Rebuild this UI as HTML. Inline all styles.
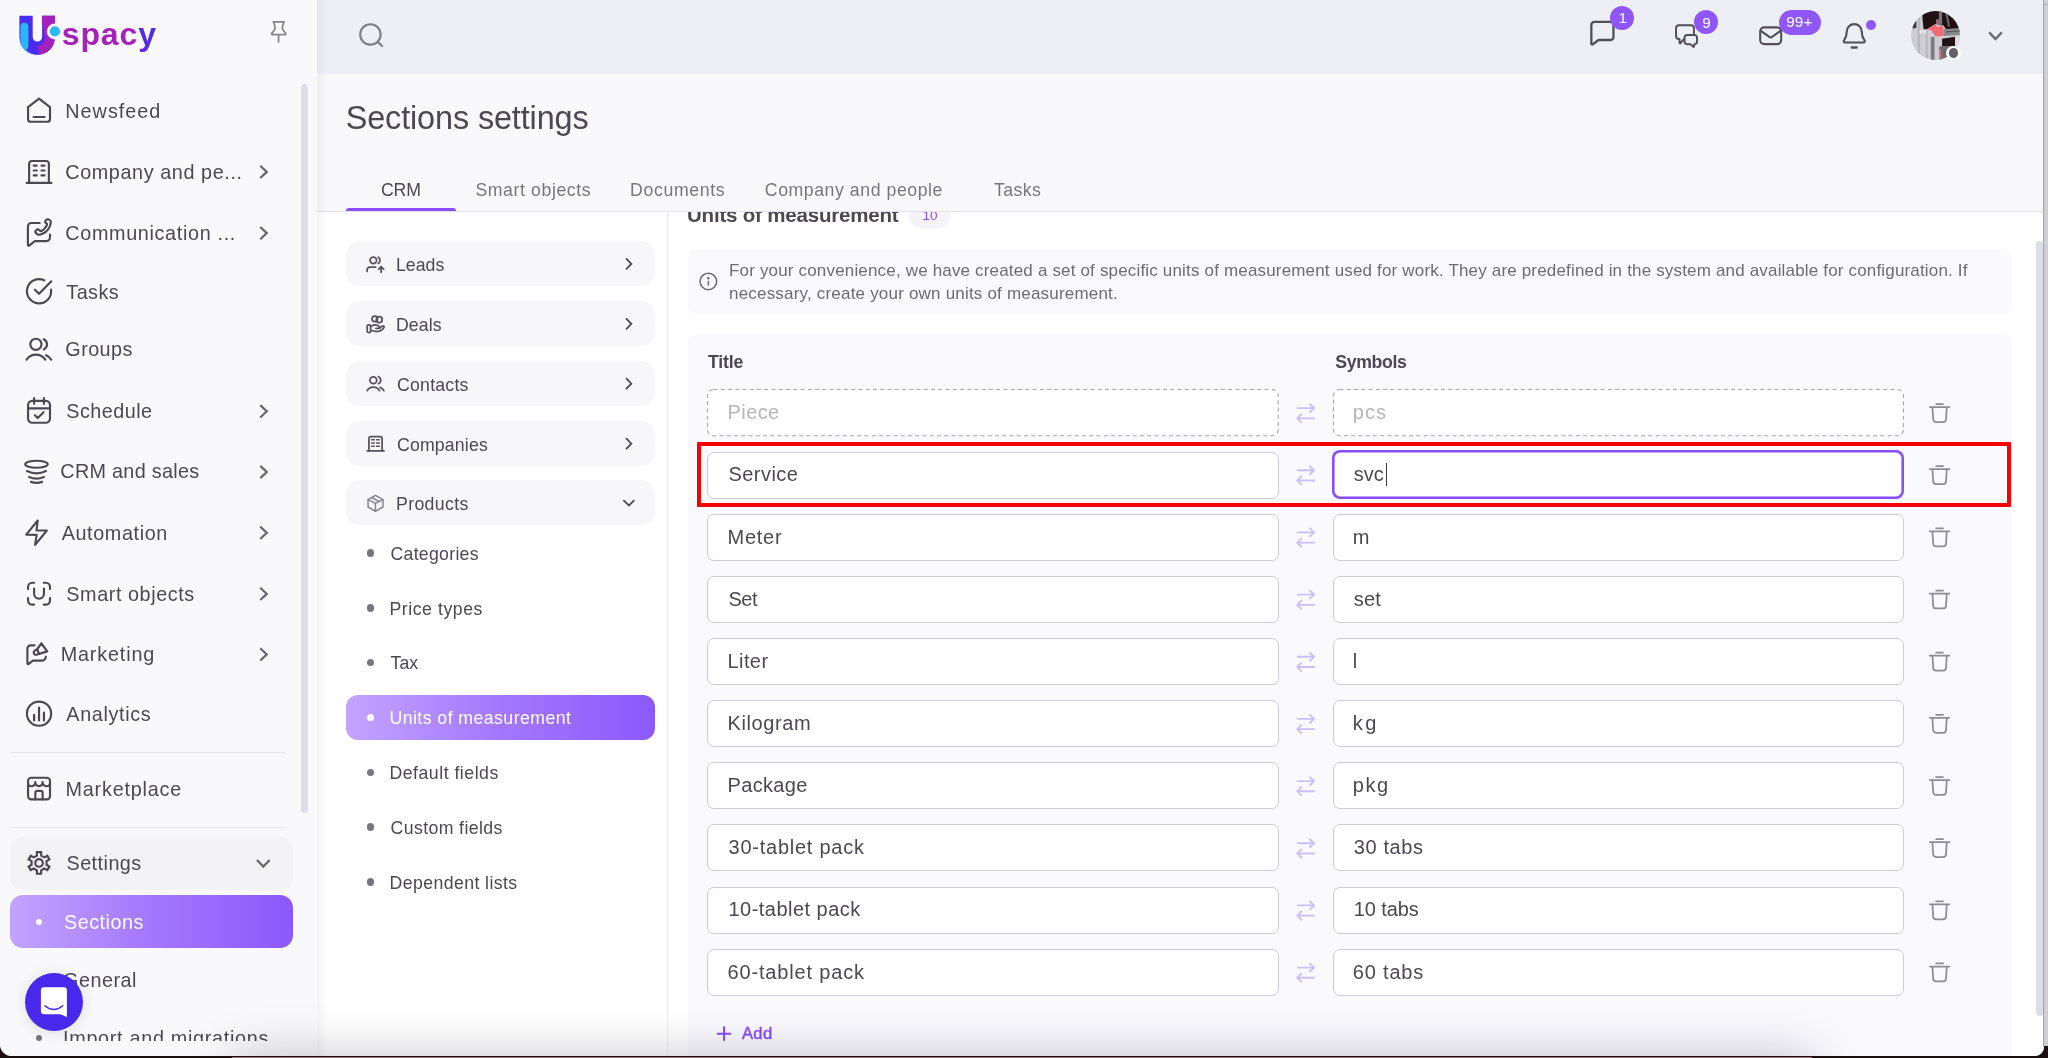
<!DOCTYPE html><html lang="en"><head><meta charset="utf-8"><title>Sections settings</title><style>
*{box-sizing:border-box;margin:0;padding:0}
html,body{width:2048px;height:1058px;overflow:hidden}
body{position:relative;background:#1b0f12;font-family:"Liberation Sans",sans-serif;color:#4b4851}
.abs,.t,.ic,#app *{position:absolute}
.t{white-space:nowrap;display:block}
h1,h2,p{font-weight:400;font-size:inherit}
#app .logo b{position:static;font-weight:inherit;color:#552be2}
#app{position:absolute;will-change:transform;left:0;top:0;width:2044px;height:1055.5px;background:#f9f9fb;border-radius:0 0 9px 12px;overflow:hidden}
#edge{left:2043px;top:0;width:5px;height:1046px;background:#d0d0d4;border-left:1.5px solid #a5a3a9}
#sidebar{left:0;top:0;width:317px;height:1056px;background:#f9f9fb}
#topbar{left:317px;top:0;width:1727px;height:73.5px;background:#eeeff5}
#content{left:317px;top:212px;width:1727px;height:844px;background:#fff}
.sep{height:1.5px;background:#e7e6eb;left:10px;width:275px}
.sbar{background:#dddde6;border-radius:4px}
.navbg{left:10px;width:282.5px;border-radius:13px}
.grad{background:linear-gradient(90deg,#c3a4fe 0%,#a67bfd 45%,#8c58fb 100%)}
.mi{left:346px;width:309px;height:45px;border-radius:14px;background:#f7f7f9}
.dot{width:7.400px;height:7.400px;border-radius:50%;background:#77757d}
.inp{height:47px;border:1.3px solid #cdccd3;border-radius:7px;background:#fff}
.inp.dis{border:1.3px dashed #b9b8bf;background:#fff}
.inp.foc{border:0;box-shadow:inset 0 0 0 2.600px #8a4dfb;border-radius:8px}
.med{-webkit-text-stroke:.45px currentColor}
.badge{background:#8f57fa;border-radius:13px}
</style></head><body>
<div id="app">
<aside id="sidebar">
<svg class="ic" style="left:17px;top:13px" width="46" height="46" viewBox="0 0 46 46">
<defs><clipPath id="uc"><path d="M2.400 2.800 H15.700 V23.900 a4.700 4.700 0 0 0 9.400 0 V2.800 H38 V24.100 a17.800 17.800 0 0 1 -35.600 0 Z"/></clipPath></defs>
<g clip-path="url(#uc)"><rect x="0" y="0" width="46" height="46" fill="#4a2cea"/>
<path d="M23 0 H40 V30 c0 8 -6 12 -17 12 l-3-9 c4 0 8-3 8-9 Z" fill="#a421bd"/>
<rect x="3.400" y="9.800" width="8" height="27" rx="4" fill="#2bb7f4"/>
<path d="M3.400 30 l10 10 l-6 2 l-6-10 Z" fill="#2bb7f4" opacity=".5"/></g>
<circle cx="37.900" cy="18.400" r="8" fill="#f9f9fb"/><circle cx="37.900" cy="18.400" r="5.100" fill="#2bb9f4"/></svg>
<span class="t logo" style="left:61.70px;top:12.70px;font-size:32px;line-height:42px;font-weight:700;letter-spacing:0.891px;color:#a620b9;">spac<b>y</b></span>
<svg class="ic" style="left:263px;top:12px;color:#85838a" width="30" height="36" viewBox="263 12 30 36" fill="none" stroke="currentColor" stroke-width="1.7" stroke-linecap="round" stroke-linejoin="round"><path d="M273.400 21.900 H284"/><path d="M273.700 22.200 C274.100 24.500 275.400 26 275.150 28.300 C274.900 30.500 272.500 32 271.700 33.500 a.75 .75 0 0 0 .650 1.100 H285.100 a.75 .75 0 0 0 .650-1.100 C285 32 282.600 30.500 282.350 28.300 C282.100 26 283.400 24.500 283.800 22.200"/><path d="M278.560 34.900 V42"/></svg>
<div class="navbg" style="top:836.5px;height:53px;background:#f3f3f6"></div>
<nav>
<svg class="ic" style="left:19px;top:90px;color:#4b4851" width="40" height="40" viewBox="19 90 40 40" fill="none" stroke="currentColor" stroke-width="2.15" stroke-linecap="round" stroke-linejoin="round"><path d="M39.04 98.7 L50 107.1 V119.200 a2.550 2.550 0 0 1-2.550 2.550 H30.620 a2.550 2.550 0 0 1-2.550-2.550 V107.100 Z"/><path d="M33.600 117.030 H44.500"/></svg>
<span class="t" style="left:65.30px;top:97.50px;font-size:19.8px;line-height:26px;letter-spacing:1.006px;">Newsfeed</span>
<svg class="ic" style="left:19px;top:152px;color:#4b4851" width="40" height="40" viewBox="19 152 40 40" fill="none" stroke="currentColor" stroke-width="2.15" stroke-linecap="round" stroke-linejoin="round"><path d="M29.130 182.800 V163.600 a2.650 2.650 0 0 1 2.650-2.650 H46.220 a2.650 2.650 0 0 1 2.650 2.650 V182.800"/><path d="M26.600 182.800 H51.500"/><path d="M33.700 165.600 h3 M41.500 165.600 h3 M33.700 170.500 h3 M41.500 170.500 h3 M33.700 175.400 h3 M41.500 175.400 h3" stroke-width="2.200"/></svg>
<span class="t" style="left:65.30px;top:158.70px;font-size:19.8px;line-height:26px;letter-spacing:0.597px;">Company and pe...</span>
<svg class="ic" style="left:251px;top:159px;color:#69666f" width="24" height="24" viewBox="251 159 24 24" fill="none" stroke="currentColor" stroke-width="2.25" stroke-linecap="butt" stroke-linejoin="miter"><path d="M260.25 165.75 L266.75 171.90 L260.25 178.05"/></svg>
<svg class="ic" style="left:20px;top:212px;color:#4b4851" width="40" height="40" viewBox="20 212 40 40" fill="none" stroke="currentColor" stroke-width="2.15" stroke-linecap="round" stroke-linejoin="round"><path d="M39.7 223 H31.4 A3.5 3.5 0 0 0 27.9 226.5 V245 a.8 .8 0 0 0 1.300 .6 L34.8 241.100 H46.500 A3.500 3.500 0 0 0 50 237.600 V234.500"/><path d="M48.17 219.18 C49.02 219.37 50.59 220.32 50.81 221.64 C51.03 222.96 50.28 225.45 49.49 227.12 C48.70 228.79 47.47 230.46 46.09 231.66 C44.70 232.86 42.50 233.80 41.17 234.31 C39.85 234.81 39.06 234.94 38.15 234.68 C37.23 234.43 36.16 233.30 35.69 232.79 C35.22 232.29 35.15 232.16 35.31 231.66 C35.47 231.16 36.16 230.15 36.64 229.77 C37.11 229.39 37.64 229.27 38.15 229.39 C38.65 229.52 39.16 230.24 39.66 230.53 C40.16 230.81 40.35 231.41 41.17 231.09 C41.99 230.78 43.60 229.71 44.57 228.64 C45.55 227.56 46.72 225.55 47.03 224.67 C47.35 223.78 46.78 223.75 46.47 223.34 C46.15 222.93 45.27 222.68 45.14 222.21 C45.02 221.74 45.20 221.01 45.71 220.51 C46.21 220.00 47.32 218.99 48.17 219.18 Z"/></svg>
<span class="t" style="left:65.30px;top:219.50px;font-size:19.8px;line-height:26px;letter-spacing:0.662px;">Communication ...</span>
<svg class="ic" style="left:251px;top:221px;color:#69666f" width="24" height="24" viewBox="251 221 24 24" fill="none" stroke="currentColor" stroke-width="2.25" stroke-linecap="butt" stroke-linejoin="miter"><path d="M260.25 226.95 L266.75 233.10 L260.25 239.25"/></svg>
<svg class="ic" style="left:19px;top:271px;color:#4b4851" width="40" height="40" viewBox="19 271 40 40" fill="none" stroke="currentColor" stroke-width="2.15" stroke-linecap="round" stroke-linejoin="round"><path d="M51.020 289.550 A12.100 12.100 0 1 1 44.190 280.280"/><path d="M34.900 289.700 L39.040 293.850 L51.300 281.300"/></svg>
<span class="t" style="left:66.30px;top:278.70px;font-size:19.8px;line-height:26px;letter-spacing:0.457px;">Tasks</span>
<svg class="ic" style="left:19px;top:330px;color:#4b4851" width="40" height="40" viewBox="19 330 40 40" fill="none" stroke="currentColor" stroke-width="2.15" stroke-linecap="round" stroke-linejoin="round"><circle cx="35.900" cy="344.290" r="5.560"/><path d="M26.560 359.680 A11.120 11.120 0 0 1 45.280 359.680"/><path d="M43.700 339.150 A5.650 5.650 0 0 1 43.700 349.450"/><path d="M46.030 355.140 Q49.600 356.600 51.330 359.680"/></svg>
<span class="t" style="left:65.30px;top:336.20px;font-size:19.8px;line-height:26px;letter-spacing:0.444px;">Groups</span>
<svg class="ic" style="left:19px;top:391px;color:#4b4851" width="40" height="40" viewBox="19 391 40 40" fill="none" stroke="currentColor" stroke-width="2.15" stroke-linecap="round" stroke-linejoin="round"><rect x="28.070" y="400.900" width="21.930" height="21.860" rx="4.200"/><path d="M34.120 398 V403.850 M43.950 398 V403.850"/><path d="M28.070 408.390 H50" stroke-width="2.300"/><path d="M34.880 415.200 L37.710 418.030 L43.570 412.170"/></svg>
<span class="t" style="left:66.30px;top:397.50px;font-size:19.8px;line-height:26px;letter-spacing:0.459px;">Schedule</span>
<svg class="ic" style="left:251px;top:399px;color:#69666f" width="24" height="24" viewBox="251 399 24 24" fill="none" stroke="currentColor" stroke-width="2.25" stroke-linecap="butt" stroke-linejoin="miter"><path d="M260.25 405.15 L266.75 411.30 L260.25 417.45"/></svg>
<svg class="ic" style="left:17px;top:452px;color:#4b4851" width="40" height="40" viewBox="17 452 40 40" fill="none" stroke="currentColor" stroke-width="2.15" stroke-linecap="round" stroke-linejoin="round"><ellipse cx="36.470" cy="464.290" rx="11.270" ry="3.500"/><path d="M26.900 471.090 Q36.470 475.700 46.040 471.090"/><path d="M29.100 476.950 Q36.470 480.400 43.920 476.950"/><path d="M30.990 481.870 Q36.470 483.800 42.140 481.870"/></svg>
<span class="t" style="left:60.30px;top:458.20px;font-size:19.8px;line-height:26px;letter-spacing:0.306px;">CRM and sales</span>
<svg class="ic" style="left:251px;top:460px;color:#69666f" width="24" height="24" viewBox="251 460 24 24" fill="none" stroke="currentColor" stroke-width="2.25" stroke-linecap="butt" stroke-linejoin="miter"><path d="M260.25 465.85 L266.75 472.00 L260.25 478.15"/></svg>
<svg class="ic" style="left:17px;top:512px;color:#4b4851" width="40" height="40" viewBox="17 512 40 40" fill="none" stroke="currentColor" stroke-width="2.15" stroke-linecap="round" stroke-linejoin="round"><path d="M37.720 520.510 L26.260 534.680 L36.660 534.870 L35.150 544.890 L46.870 530.530 L36.470 530.410 Z"/></svg>
<span class="t" style="left:61.70px;top:519.50px;font-size:19.8px;line-height:26px;letter-spacing:0.615px;">Automation</span>
<svg class="ic" style="left:251px;top:520px;color:#69666f" width="24" height="24" viewBox="251 520 24 24" fill="none" stroke="currentColor" stroke-width="2.25" stroke-linecap="butt" stroke-linejoin="miter"><path d="M260.25 526.65 L266.75 532.80 L260.25 538.95"/></svg>
<svg class="ic" style="left:19px;top:574px;color:#4b4851" width="40" height="40" viewBox="19 574 40 40" fill="none" stroke="currentColor" stroke-width="2.15" stroke-linecap="round" stroke-linejoin="round"><path d="M28.070 589.120 V586.900 A4.200 4.200 0 0 1 32.270 582.700 H34.120 M43.760 582.700 H45.800 A4.200 4.200 0 0 1 50 586.900 V589.120 M50 598 V600.420 A4.200 4.200 0 0 1 45.800 604.620 H43.760 M34.120 604.620 H32.270 A4.200 4.200 0 0 1 28.070 600.420 V598"/><path d="M34.120 588.560 V593.850 a4.915 4.915 0 0 0 9.830 0 V588.560"/></svg>
<span class="t" style="left:66.30px;top:580.50px;font-size:19.8px;line-height:26px;letter-spacing:0.580px;">Smart objects</span>
<svg class="ic" style="left:251px;top:581px;color:#69666f" width="24" height="24" viewBox="251 581 24 24" fill="none" stroke="currentColor" stroke-width="2.25" stroke-linecap="butt" stroke-linejoin="miter"><path d="M260.25 587.75 L266.75 593.90 L260.25 600.05"/></svg>
<svg class="ic" style="left:17px;top:634px;color:#4b4851" width="40" height="40" viewBox="17 634 40 40" fill="none" stroke="currentColor" stroke-width="2.15" stroke-linecap="round" stroke-linejoin="round"><path d="M34.580 645.340 H30.600 A3.200 3.200 0 0 0 27.400 648.540 V663.300 a.8 .8 0 0 0 1.300 .600 L32.900 660.650 H42.200 Q45.300 660.500 45.920 656.700"/><path d="M41.390 643.260 L47.250 651.390 L36.500 654.700 A2.300 2.300 0 0 1 34.500 650.700 L36.900 649.500 Z"/><path d="M37.500 649.400 Q37.600 652.200 39.500 653.600"/></svg>
<span class="t" style="left:60.70px;top:641.20px;font-size:19.8px;line-height:26px;letter-spacing:0.844px;">Marketing</span>
<svg class="ic" style="left:251px;top:642px;color:#69666f" width="24" height="24" viewBox="251 642 24 24" fill="none" stroke="currentColor" stroke-width="2.25" stroke-linecap="butt" stroke-linejoin="miter"><path d="M260.25 648.25 L266.75 654.40 L260.25 660.55"/></svg>
<svg class="ic" style="left:19px;top:694px;color:#4b4851" width="40" height="40" viewBox="19 694 40 40" fill="none" stroke="currentColor" stroke-width="2.15" stroke-linecap="round" stroke-linejoin="round"><circle cx="39.040" cy="713.660" r="12.100"/><path d="M34.120 714.900 V720.400 M39.040 707.500 V720.400 M43.950 712.600 V720.400" stroke-width="2.200"/></svg>
<span class="t" style="left:66.30px;top:700.50px;font-size:19.8px;line-height:26px;letter-spacing:0.655px;">Analytics</span>
<svg class="ic" style="left:19px;top:769px;color:#4b4851" width="40" height="40" viewBox="19 769 40 40" fill="none" stroke="currentColor" stroke-width="2.15" stroke-linecap="round" stroke-linejoin="round"><rect x="28.070" y="777.770" width="21.930" height="21.660" rx="3.100"/><path d="M28.070 783.400 c0 4 7.260 4 7.260-1.300 c0 5.300 7.300 5.300 7.300 0 c0 5.300 7.370 5.300 7.370 1.300"/><path d="M35.330 799.430 V793 a2.100 2.100 0 0 1 2.100-2.100 h3.100 a2.100 2.100 0 0 1 2.100 2.100 V799.430"/></svg>
<span class="t" style="left:65.50px;top:776.00px;font-size:19.8px;line-height:26px;letter-spacing:0.806px;">Marketplace</span>
<svg class="ic" style="left:19px;top:843px;color:#4b4851" width="40" height="40" viewBox="19 843 40 40" fill="none" stroke="currentColor" stroke-width="2.15" stroke-linecap="round" stroke-linejoin="round"><path d="M36.88 855.57 L36.96 852.16 L41.12 852.16 L41.20 855.57 L44.36 857.39 L47.36 855.76 L49.43 859.36 L46.52 861.14 L46.52 864.78 L49.43 866.56 L47.36 870.16 L44.36 868.53 L41.20 870.35 L41.12 873.76 L36.96 873.76 L36.88 870.35 L33.72 868.53 L30.72 870.16 L28.65 866.56 L31.56 864.78 L31.56 861.14 L28.65 859.36 L30.72 855.76 L33.72 857.39 Z" stroke-linejoin="miter"/><circle cx="39.040" cy="862.960" r="3.800"/></svg>
<span class="t" style="left:66.50px;top:850.30px;font-size:19.8px;line-height:26px;letter-spacing:0.459px;">Settings</span>
<svg class="ic" style="left:251px;top:851px;color:#69666f" width="24" height="24" viewBox="251 851 24 24" fill="none" stroke="currentColor" stroke-width="2.25" stroke-linecap="butt" stroke-linejoin="miter"><path d="M256.95 860.00 L263.30 866.60 L269.65 860.00"/></svg>
</nav>
<div class="sep" style="top:751.5px"></div><div class="sep" style="top:826.5px"></div>
<div class="navbg grad" style="top:895.100px;height:53.100px"></div>
<div class="dot" style="left:35.600px;top:918.600px;width:6.400px;height:6.400px;background:#fff"></div>
<span class="t" style="left:64.00px;top:909.30px;font-size:19.8px;line-height:26px;letter-spacing:0.489px;color:#fff;">Sections</span>
<span class="t" style="left:63.00px;top:967.30px;font-size:19.8px;line-height:26px;letter-spacing:0.503px;">General</span>
<div style="left:0;top:1000px;width:317px;height:41px;overflow:hidden"><div class="dot" style="left:35.900px;top:35.300px;width:6.200px;height:6.200px"></div>
<span class="t" style="left:63.00px;top:24.60px;font-size:19.8px;line-height:26px;letter-spacing:0.704px;">Import and migrations</span>
</div>
<div class="sbar" style="left:300.700px;top:84px;width:7px;height:728.5px"></div>
<div style="left:24.500px;top:973px;width:58.200px;height:58.200px;border-radius:50%;background:#4728ec;box-shadow:0 2px 14px 2px rgba(30,30,50,.09)"></div>
<svg class="ic" style="left:38px;top:985px" width="32" height="34" viewBox="38 985 32 34"><path d="M43.900 987.300 H63.900 a3 3 0 0 1 3 3 V1016.900 L60.500 1014.200 H43.900 a3 3 0 0 1-3-3 V990.300 a3 3 0 0 1 3-3 Z" fill="#fff"/><path d="M44.900 1005.700 Q53.700 1013.400 62.800 1005.700" fill="none" stroke="#4728ec" stroke-width="1.400" stroke-linecap="round"/></svg>
</aside>
<header id="topbar"></header>
<svg class="ic" style="left:350px;top:15px;color:#807e86" width="40" height="40" viewBox="350 15 40 40" fill="none" stroke="currentColor" stroke-width="2.2" stroke-linecap="round" stroke-linejoin="round"><circle cx="370.420" cy="34.470" r="10.200"/><path d="M377.800 41.850 L382.100 46"/></svg>
<svg class="ic" style="left:1580px;top:10px;color:#524f57" width="44" height="44" viewBox="1580 10 44 44" fill="none" stroke="currentColor" stroke-width="2.3" stroke-linecap="round" stroke-linejoin="round"><path d="M1594.440 21.840 H1610.370 a3.100 3.100 0 0 1 3.100 3.100 V36.900 a3.100 3.100 0 0 1-3.100 3.100 H1598.500 L1592.800 44.450 a.9 .9 0 0 1-1.460-.700 V24.940 a3.100 3.100 0 0 1 3.100-3.100 Z"/></svg>
<svg class="ic" style="left:1668px;top:16px;color:#524f57" width="40" height="40" viewBox="1668 16 40 40" fill="none" stroke="currentColor" stroke-width="1.95" stroke-linecap="round" stroke-linejoin="round"><path d="M1683.600 39.300 L1680.600 43.150 a.6 .6 0 0 1-1.070-.4 V39.030 H1679 a2.950 2.950 0 0 1-2.950-2.950 V28.100 a2.950 2.950 0 0 1 2.950-2.950 H1690.980 a2.950 2.950 0 0 1 2.950 2.950 V34.700"/><path d="M1687.120 35.060 H1694.500 a2.550 2.550 0 0 1 2.550 2.550 V41.600 a2.550 2.550 0 0 1-2.550 2.550 h-.25 l-.15 2.300 a.5 .5 0 0 1-.85 .300 L1690.400 44.150 H1687.120 a2.550 2.550 0 0 1-2.550-2.550 V37.610 a2.550 2.550 0 0 1 2.550-2.550 Z"/></svg>
<svg class="ic" style="left:1752px;top:18px;color:#524f57" width="40" height="36" viewBox="1752 18 40 36" fill="none" stroke="currentColor" stroke-width="2.1" stroke-linecap="round" stroke-linejoin="round"><rect x="1760.200" y="27.390" width="20.980" height="16.730" rx="4"/><path d="M1760.900 30.900 L1769.300 36.900 a2.400 2.400 0 0 0 2.800 0 L1780.500 30.900"/></svg>
<svg class="ic" style="left:1834px;top:14px;color:#524f57" width="42" height="42" viewBox="1834 14 42 42" fill="none" stroke="currentColor" stroke-width="2.1" stroke-linecap="round" stroke-linejoin="round"><path d="M1854.250 24.100 a7.450 7.450 0 0 0-7.450 7.450 c0 4.500-1.200 6.600-2.900 9.100 a1.150 1.150 0 0 0 .95 1.800 H1863.650 a1.150 1.150 0 0 0 .95-1.800 c-1.700-2.500-2.900-4.600-2.900-9.100 a7.450 7.450 0 0 0-7.450-7.450 Z"/><path d="M1851.900 47.540 H1856.600" stroke-width="2.600"/></svg>
<div class="badge" style="left:1610.000px;top:5.600px;width:24px;height:24px"></div>
<span class="t" style="left:1618.40px;top:7.75px;font-size:15.3px;line-height:20px;color:#fff;">1</span>
<div class="badge" style="left:1694.100px;top:10.300px;width:24px;height:24px"></div>
<span class="t" style="left:1702.20px;top:12.50px;font-size:15.3px;line-height:20px;color:#fff;">9</span>
<div class="badge" style="left:1778.600px;top:10.100px;width:42.300px;height:24.600px"></div>
<span class="t" style="left:1786.30px;top:12.45px;font-size:15.3px;line-height:20px;letter-spacing:0.043px;color:#fff;">99+</span>
<div class="badge" style="left:1866.300px;top:20.050px;width:9.600px;height:9.600px"></div>
<svg class="ic" style="left:1911.200px;top:10.900px" width="49" height="49" viewBox="0 0 49 49"><defs><clipPath id="av"><circle cx="24.500" cy="24.500" r="24.450"/></clipPath></defs><g clip-path="url(#av)"><rect width="49" height="49" fill="#cdccd1"/><path d="M11.2 0.0 L48.9 0.0 L48.9 20.8 L43.7 18.2 L35.1 18.8 L32.4 14.2 L24.5 12.9 L15.9 18.2 L12.6 18.2 L11.6 8.9 Z" fill="#1f1114"/><path d="M27.8 0.0 L31.1 0.0 L31.1 14.9 L27.8 14.2 Z" fill="#77757b"/><path d="M34.4 2.3 L36.4 2.3 L39.0 15.5 L37.0 15.5 Z" fill="#6d6b71"/><path d="M32.4 18.2 L48.9 16.9 L48.9 24.1 L32.4 25.1 Z" fill="#8b8990"/><path d="M35.1 20.2 L48.3 19.2 L48.3 20.5 L35.1 21.6 Z" fill="#5d5b61"/><path d="M31.1 27.8 L44.0 25.8 L44.0 35.4 L31.1 35.4 Z" fill="#1f1114"/><path d="M28.4 35.4 L39.0 34.7 L36.4 49.3 L28.4 49.3 Z" fill="#6c6a70"/><path d="M19.8 26.1 L23.5 26.1 L23.5 49.3 L19.8 49.3 Z" fill="#7d7b81"/><path d="M6.9 5.6 L8.6 5.6 L8.6 49.3 L6.9 49.3 Z" fill="#b3b2b7"/><path d="M15.2 18.8 L16.5 18.8 L16.5 49.3 L15.2 49.3 Z" fill="#b0afb4"/><path d="M8.6 19.5 L15.2 18.8 L15.2 22.2 L8.6 22.8 Z" fill="#e3e2e6"/><path d="M2.0 10.9 L5.3 10.3 L5.3 16.9 L1.3 17.5 Z" fill="#40363a"/><path d="M44.0 26.1 L48.9 24.8 L48.9 35.4 L44.0 35.4 Z" fill="#dddce0"/><path d="M15.9 18.2 L24.8 13.0 L25.8 15.7 L28.4 15.7 L31.9 14.1 L32.5 24.8 L24.5 25.6 L20.5 19.6 Z" fill="#f46b74"/><path d="M25.0 8.3 L27.9 8.3 L27.9 13.0 L25.0 13.0 Z" fill="#8d6a70"/><path d="M28.4 39.4 L30.1 39.0 L30.3 47.3 L28.8 47.3 Z" fill="#d9767c"/></g></svg>
<div style="left:1946.300px;top:45.800px;width:14.300px;height:14.300px;border-radius:50%;background:#fff"></div><div style="left:1948.650px;top:48.150px;width:9.600px;height:9.600px;border-radius:50%;background:#625f67"></div>
<svg class="ic" style="left:1983px;top:23px;color:#6b6870" width="24" height="24" viewBox="1983 23 24 24" fill="none" stroke="currentColor" stroke-width="2.25" stroke-linecap="butt" stroke-linejoin="miter"><path d="M1989.20 32.40 L1995.50 39.00 L2001.80 32.40"/></svg>
<main>
<h1 class="t" style="left:345.70px;top:96.60px;font-size:32.4px;line-height:42px;letter-spacing:-0.116px;">Sections settings</h1>
<span class="t" style="left:381.00px;top:178.70px;font-size:17.7px;line-height:23px;letter-spacing:-0.173px;">CRM</span>
<span class="t" style="left:475.40px;top:178.70px;font-size:17.7px;line-height:23px;letter-spacing:0.593px;color:#77757d;">Smart objects</span>
<span class="t" style="left:630.10px;top:178.70px;font-size:17.7px;line-height:23px;letter-spacing:0.636px;color:#77757d;">Documents</span>
<span class="t" style="left:764.80px;top:178.70px;font-size:17.7px;line-height:23px;letter-spacing:0.558px;color:#77757d;">Company and people</span>
<span class="t" style="left:994.00px;top:178.70px;font-size:17.7px;line-height:23px;letter-spacing:0.383px;color:#77757d;">Tasks</span>
<div id="content"></div>
<div style="left:317px;top:210.800px;width:1727px;height:1.400px;background:#e4e3e9"></div>
<div style="left:345.900px;top:208.100px;width:110.200px;height:3px;background:#8b4dfb;border-radius:3px 3px 0 0"></div>
<div style="left:666.800px;top:212px;width:1.400px;height:844px;background:#ececf1"></div>
<div class="mi" style="top:241.2px"></div>
<svg class="ic" style="left:360px;top:249px;color:#55525b" width="30" height="30" viewBox="360 249 30 30" fill="none" stroke="currentColor" stroke-width="1.75" stroke-linecap="round" stroke-linejoin="round"><circle cx="373.330" cy="260.340" r="3.300"/><path d="M378.150 257.250 A3.450 3.450 0 0 1 378.150 263.450"/><path d="M367.090 271.400 V270 A3 3 0 0 1 370.090 267 H375.600"/><path d="M381.120 272.200 V266.800 M378.500 269.250 L381.120 266.650 L383.750 269.250"/></svg>
<span class="t" style="left:396.00px;top:253.70px;font-size:17.7px;line-height:23px;letter-spacing:0.038px;">Leads</span>
<svg class="ic" style="left:616px;top:251px;color:#4b4851" width="24" height="24" viewBox="616 251 24 24" fill="none" stroke="currentColor" stroke-width="1.8" stroke-linecap="round" stroke-linejoin="miter"><path d="M626.50 258.90 L631.30 263.90 L626.50 268.90"/></svg>
<div class="mi" style="top:301.1px"></div>
<svg class="ic" style="left:360px;top:309px;color:#55525b" width="30" height="30" viewBox="360 309 30 30" fill="none" stroke="currentColor" stroke-width="1.75" stroke-linecap="round" stroke-linejoin="round"><circle cx="374.740" cy="318.780" r="2.750"/><circle cx="379.280" cy="319.630" r="2.900"/><rect x="367.230" y="324.880" width="3.400" height="7.650" rx="1.200"/><path d="M370.900 326.400 C372.500 325.600 374 324.800 375.600 324.900 C377.200 325 378.300 325.500 379 326.300 C379.700 327 379.900 327.900 379.300 328.300 H376"/><path d="M370.900 330.500 C373 330.500 375 331.600 377.300 331.500 C379.500 331.300 381.200 330.600 382.200 329.600 L383.900 327.600 C384.600 326.500 383.400 325.400 382.300 326.100 L379.600 328"/></svg>
<span class="t" style="left:396.00px;top:313.60px;font-size:17.7px;line-height:23px;letter-spacing:0.081px;">Deals</span>
<svg class="ic" style="left:616px;top:311px;color:#4b4851" width="24" height="24" viewBox="616 311 24 24" fill="none" stroke="currentColor" stroke-width="1.8" stroke-linecap="round" stroke-linejoin="miter"><path d="M626.50 318.80 L631.30 323.80 L626.50 328.80"/></svg>
<div class="mi" style="top:361px"></div>
<svg class="ic" style="left:360px;top:369px;color:#55525b" width="30" height="30" viewBox="360 369 30 30" fill="none" stroke="currentColor" stroke-width="1.75" stroke-linecap="round" stroke-linejoin="round"><circle cx="373.330" cy="380.340" r="3.400"/><path d="M378.430 376.700 A3.800 3.800 0 0 1 378.430 383.700"/><path d="M367.090 390.690 A7.300 7.300 0 0 1 379.560 390.690"/><path d="M380.270 387.430 Q382.600 388.400 383.820 390.690"/></svg>
<span class="t" style="left:397.00px;top:373.50px;font-size:17.7px;line-height:23px;letter-spacing:0.235px;">Contacts</span>
<svg class="ic" style="left:616px;top:371px;color:#4b4851" width="24" height="24" viewBox="616 371 24 24" fill="none" stroke="currentColor" stroke-width="1.8" stroke-linecap="round" stroke-linejoin="miter"><path d="M626.50 378.70 L631.30 383.70 L626.50 388.70"/></svg>
<div class="mi" style="top:421px"></div>
<svg class="ic" style="left:360px;top:429px;color:#55525b" width="30" height="30" viewBox="360 429 30 30" fill="none" stroke="currentColor" stroke-width="1.75" stroke-linecap="round" stroke-linejoin="round"><path d="M368.930 450.900 V438.500 a2 2 0 0 1 2-2 H380.110 a2 2 0 0 1 2 2 V450.900"/><path d="M367.230 450.970 H383.960"/><path d="M371.600 439.630 h2.700 M376.600 439.630 h2.700 M371.600 443.030 h2.700 M376.600 443.030 h2.700 M371.600 446.300 h2.700 M376.600 446.300 h2.700" stroke-width="1.500"/></svg>
<span class="t" style="left:397.00px;top:433.50px;font-size:17.7px;line-height:23px;letter-spacing:0.160px;">Companies</span>
<svg class="ic" style="left:616px;top:431px;color:#4b4851" width="24" height="24" viewBox="616 431 24 24" fill="none" stroke="currentColor" stroke-width="1.8" stroke-linecap="round" stroke-linejoin="miter"><path d="M626.50 438.70 L631.30 443.70 L626.50 448.70"/></svg>
<div class="mi" style="top:480.4px"></div>
<svg class="ic" style="left:360px;top:488px;color:#84828a" width="30" height="30" viewBox="360 488 30 30" fill="none" stroke="currentColor" stroke-width="1.45" stroke-linecap="round" stroke-linejoin="round"><path d="M375.450 495.370 L382.970 499.620 V507 L375.450 511.250 L368.080 507 V499.620 Z"/><path d="M368.080 499.620 L375.450 503.450 L382.970 499.620 M375.450 503.450 V511.250 M371.700 497.500 L379.200 501.600"/></svg>
<span class="t" style="left:396.00px;top:492.90px;font-size:17.7px;line-height:23px;letter-spacing:0.363px;">Products</span>
<svg class="ic" style="left:616px;top:491px;color:#4b4851" width="24" height="24" viewBox="616 491 24 24" fill="none" stroke="currentColor" stroke-width="1.8" stroke-linecap="round" stroke-linejoin="miter"><path d="M623.90 500.70 L628.90 505.50 L633.90 500.70"/></svg>
<div class="dot" style="left:366.800px;top:549.4px;"></div>
<span class="t" style="left:390.50px;top:542.70px;font-size:17.7px;line-height:23px;letter-spacing:0.279px;">Categories</span>
<div class="dot" style="left:366.800px;top:604.2px;"></div>
<span class="t" style="left:389.50px;top:597.50px;font-size:17.7px;line-height:23px;letter-spacing:0.536px;">Price types</span>
<div class="dot" style="left:366.800px;top:659.0px;"></div>
<span class="t" style="left:390.50px;top:652.30px;font-size:17.7px;line-height:23px;letter-spacing:0.060px;">Tax</span>
<div class="grad" style="left:346px;top:694.800px;width:309px;height:45px;border-radius:12px"></div>
<div class="dot" style="left:366.800px;top:713.7px;background:#fff"></div>
<span class="t" style="left:389.50px;top:707.00px;font-size:17.7px;line-height:23px;letter-spacing:0.442px;color:#fff;">Units of measurement</span>
<div class="dot" style="left:366.800px;top:768.6px;"></div>
<span class="t" style="left:389.50px;top:761.90px;font-size:17.7px;line-height:23px;letter-spacing:0.500px;">Default fields</span>
<div class="dot" style="left:366.800px;top:823.4px;"></div>
<span class="t" style="left:390.50px;top:816.70px;font-size:17.7px;line-height:23px;letter-spacing:0.392px;">Custom fields</span>
<div class="dot" style="left:366.800px;top:878.2px;"></div>
<span class="t" style="left:389.50px;top:871.50px;font-size:17.7px;line-height:23px;letter-spacing:0.409px;">Dependent lists</span>
<section>
<div style="left:668px;top:212px;width:1370px;height:30px;overflow:hidden">
<h2 class="t" style="left:19.00px;top:-11.30px;font-size:20.5px;line-height:27px;font-weight:700;letter-spacing:-0.193px;">Units of measurement</h2>
<div style="left:241px;top:-11px;width:40.500px;height:28px;border-radius:14px;background:#f5f4fa"></div>
<span class="t" style="left:254.40px;top:-5.00px;font-size:13.5px;line-height:18px;letter-spacing:0.092px;color:#8a4dfb;">10</span>
</div>
<div style="left:687.500px;top:249.200px;width:1324px;height:65.400px;border-radius:9px;background:#faf9fe"></div>
<svg class="ic" style="left:694px;top:268px;color:#6b6971" width="28" height="28" viewBox="694 268 28 28" fill="none" stroke="currentColor" stroke-width="1.5" stroke-linecap="round" stroke-linejoin="round"><circle cx="708.340" cy="281.470" r="8.300"/><path d="M708.340 281.500 V285.100"/><circle cx="708.340" cy="278.200" r=".55" fill="currentColor"/></svg>
<p class="t" style="left:729.00px;top:259.70px;font-size:17px;line-height:22px;letter-spacing:0.171px;color:#6d6b73;">For your convenience, we have created a set of specific units of measurement used for work. They are predefined in the system and available for configuration. If</p>
<p class="t" style="left:729.00px;top:282.90px;font-size:17px;line-height:22px;letter-spacing:0.196px;color:#6d6b73;">necessary, create your own units of measurement.</p>
<div style="left:687.500px;top:333.800px;width:1324px;height:740px;border-radius:9px;background:#faf9fe"></div>
<span class="t" style="left:708.00px;top:351.00px;font-size:17.7px;line-height:23px;font-weight:700;letter-spacing:-0.176px;">Title</span>
<span class="t" style="left:1335.30px;top:351.00px;font-size:17.7px;line-height:23px;font-weight:700;letter-spacing:-0.364px;">Symbols</span>
<svg class="ic" style="left:700px;top:384px" width="1210" height="58" viewBox="700 384 1210 58"><rect x="707.500" y="389.500" width="570.700" height="46.200" rx="6" fill="#fff" stroke="#a9a8af" stroke-width="1.150" stroke-dasharray="4 3.250"/><rect x="1333.500" y="389.500" width="569.900" height="46.200" rx="6" fill="#fff" stroke="#a9a8af" stroke-width="1.150" stroke-dasharray="4 3.250"/></svg>
<span class="t" style="left:727.50px;top:399.20px;font-size:20px;line-height:26px;letter-spacing:0.423px;color:#b6b5bd;">Piece</span>
<span class="t" style="left:1352.80px;top:399.20px;font-size:20px;line-height:26px;letter-spacing:1.088px;color:#b6b5bd;">pcs</span>
<svg class="ic" style="left:1290px;top:397px;color:#cbbffa" width="32" height="32" viewBox="1290 397 32 32" fill="none" stroke="currentColor" stroke-width="1.850" stroke-linecap="butt" stroke-linejoin="miter"><path d="M1296.900 408.12 H1313.600 M1309.400 403.62 L1314 408.12 L1309.400 412.62"/><path d="M1314.900 418.33 H1298.100 M1301.850 413.73 L1297.300 418.33 L1301.850 422.93"/></svg>
<svg class="ic" style="left:1924px;top:397px;color:#8e8c93" width="32" height="32" viewBox="1924 397 32 32" fill="none" stroke="currentColor" stroke-width="1.750" stroke-linecap="round" stroke-linejoin="round"><path d="M1936.200 404.04 H1943"/><path d="M1929.800 407.06 H1949.400"/><path d="M1932.450 407.50 L1933.150 418.90 a3.100 3.100 0 0 0 3.100 3.100 h6.700 a3.100 3.100 0 0 0 3.100-3.100 L1946.750 407.50"/></svg>
<div class="inp" style="left:707px;top:451.5px;width:571.600px"></div>
<div class="inp foc" style="left:1332.200px;top:449.900px;width:572.200px;height:49.400px"></div>
<span class="t" style="left:728.50px;top:461.36px;font-size:20px;line-height:26px;letter-spacing:0.456px;">Service</span>
<span class="t" style="left:1353.80px;top:461.36px;font-size:20px;line-height:26px;">svc</span>
<svg class="ic" style="left:1290px;top:459px;color:#cbbffa" width="32" height="32" viewBox="1290 459 32 32" fill="none" stroke="currentColor" stroke-width="1.850" stroke-linecap="butt" stroke-linejoin="miter"><path d="M1296.900 470.28 H1313.600 M1309.400 465.78 L1314 470.28 L1309.400 474.78"/><path d="M1314.900 480.49 H1298.100 M1301.850 475.89 L1297.300 480.49 L1301.850 485.09"/></svg>
<svg class="ic" style="left:1924px;top:459px;color:#8e8c93" width="32" height="32" viewBox="1924 459 32 32" fill="none" stroke="currentColor" stroke-width="1.750" stroke-linecap="round" stroke-linejoin="round"><path d="M1936.200 466.20 H1943"/><path d="M1929.800 469.22 H1949.400"/><path d="M1932.450 469.66 L1933.150 481.06 a3.100 3.100 0 0 0 3.100 3.100 h6.700 a3.100 3.100 0 0 0 3.100-3.100 L1946.750 469.66"/></svg>
<div class="inp" style="left:707px;top:513.6px;width:571.600px"></div>
<div class="inp" style="left:1333px;top:513.6px;width:570.800px"></div>
<span class="t" style="left:727.50px;top:523.52px;font-size:20px;line-height:26px;letter-spacing:0.759px;">Meter</span>
<span class="t" style="left:1352.80px;top:523.52px;font-size:20px;line-height:26px;">m</span>
<svg class="ic" style="left:1290px;top:521px;color:#cbbffa" width="32" height="32" viewBox="1290 521 32 32" fill="none" stroke="currentColor" stroke-width="1.850" stroke-linecap="butt" stroke-linejoin="miter"><path d="M1296.900 532.44 H1313.600 M1309.400 527.94 L1314 532.44 L1309.400 536.94"/><path d="M1314.900 542.65 H1298.100 M1301.850 538.05 L1297.300 542.65 L1301.850 547.25"/></svg>
<svg class="ic" style="left:1924px;top:521px;color:#8e8c93" width="32" height="32" viewBox="1924 521 32 32" fill="none" stroke="currentColor" stroke-width="1.750" stroke-linecap="round" stroke-linejoin="round"><path d="M1936.200 528.36 H1943"/><path d="M1929.800 531.38 H1949.400"/><path d="M1932.450 531.82 L1933.150 543.22 a3.100 3.100 0 0 0 3.100 3.100 h6.700 a3.100 3.100 0 0 0 3.100-3.100 L1946.750 531.82"/></svg>
<div class="inp" style="left:707px;top:575.8px;width:571.600px"></div>
<div class="inp" style="left:1333px;top:575.8px;width:570.800px"></div>
<span class="t" style="left:728.50px;top:585.68px;font-size:20px;line-height:26px;letter-spacing:-0.481px;">Set</span>
<span class="t" style="left:1353.80px;top:585.68px;font-size:20px;line-height:26px;letter-spacing:0.138px;">set</span>
<svg class="ic" style="left:1290px;top:583px;color:#cbbffa" width="32" height="32" viewBox="1290 583 32 32" fill="none" stroke="currentColor" stroke-width="1.850" stroke-linecap="butt" stroke-linejoin="miter"><path d="M1296.900 594.60 H1313.600 M1309.400 590.10 L1314 594.60 L1309.400 599.10"/><path d="M1314.900 604.81 H1298.100 M1301.850 600.21 L1297.300 604.81 L1301.850 609.41"/></svg>
<svg class="ic" style="left:1924px;top:583px;color:#8e8c93" width="32" height="32" viewBox="1924 583 32 32" fill="none" stroke="currentColor" stroke-width="1.750" stroke-linecap="round" stroke-linejoin="round"><path d="M1936.200 590.52 H1943"/><path d="M1929.800 593.54 H1949.400"/><path d="M1932.450 593.98 L1933.150 605.38 a3.100 3.100 0 0 0 3.100 3.100 h6.700 a3.100 3.100 0 0 0 3.100-3.100 L1946.750 593.98"/></svg>
<div class="inp" style="left:707px;top:637.9px;width:571.600px"></div>
<div class="inp" style="left:1333px;top:637.9px;width:570.800px"></div>
<span class="t" style="left:727.50px;top:647.84px;font-size:20px;line-height:26px;letter-spacing:0.413px;">Liter</span>
<span class="t" style="left:1352.80px;top:647.84px;font-size:20px;line-height:26px;">l</span>
<svg class="ic" style="left:1290px;top:645px;color:#cbbffa" width="32" height="32" viewBox="1290 645 32 32" fill="none" stroke="currentColor" stroke-width="1.850" stroke-linecap="butt" stroke-linejoin="miter"><path d="M1296.900 656.76 H1313.600 M1309.400 652.26 L1314 656.76 L1309.400 661.26"/><path d="M1314.900 666.97 H1298.100 M1301.850 662.37 L1297.300 666.97 L1301.850 671.57"/></svg>
<svg class="ic" style="left:1924px;top:645px;color:#8e8c93" width="32" height="32" viewBox="1924 645 32 32" fill="none" stroke="currentColor" stroke-width="1.750" stroke-linecap="round" stroke-linejoin="round"><path d="M1936.200 652.68 H1943"/><path d="M1929.800 655.70 H1949.400"/><path d="M1932.450 656.14 L1933.150 667.54 a3.100 3.100 0 0 0 3.100 3.100 h6.700 a3.100 3.100 0 0 0 3.100-3.100 L1946.750 656.14"/></svg>
<div class="inp" style="left:707px;top:700.1px;width:571.600px"></div>
<div class="inp" style="left:1333px;top:700.1px;width:570.800px"></div>
<span class="t" style="left:727.50px;top:710.00px;font-size:20px;line-height:26px;letter-spacing:0.592px;">Kilogram</span>
<span class="t" style="left:1352.80px;top:710.00px;font-size:20px;line-height:26px;letter-spacing:2.400px;">kg</span>
<svg class="ic" style="left:1290px;top:708px;color:#cbbffa" width="32" height="32" viewBox="1290 708 32 32" fill="none" stroke="currentColor" stroke-width="1.850" stroke-linecap="butt" stroke-linejoin="miter"><path d="M1296.900 718.92 H1313.600 M1309.400 714.42 L1314 718.92 L1309.400 723.42"/><path d="M1314.900 729.13 H1298.100 M1301.850 724.53 L1297.300 729.13 L1301.850 733.73"/></svg>
<svg class="ic" style="left:1924px;top:708px;color:#8e8c93" width="32" height="32" viewBox="1924 708 32 32" fill="none" stroke="currentColor" stroke-width="1.750" stroke-linecap="round" stroke-linejoin="round"><path d="M1936.200 714.84 H1943"/><path d="M1929.800 717.86 H1949.400"/><path d="M1932.450 718.30 L1933.150 729.70 a3.100 3.100 0 0 0 3.100 3.100 h6.700 a3.100 3.100 0 0 0 3.100-3.100 L1946.750 718.30"/></svg>
<div class="inp" style="left:707px;top:762.3px;width:571.600px"></div>
<div class="inp" style="left:1333px;top:762.3px;width:570.800px"></div>
<span class="t" style="left:727.50px;top:772.16px;font-size:20px;line-height:26px;letter-spacing:0.349px;">Package</span>
<span class="t" style="left:1352.80px;top:772.16px;font-size:20px;line-height:26px;letter-spacing:1.538px;">pkg</span>
<svg class="ic" style="left:1290px;top:770px;color:#cbbffa" width="32" height="32" viewBox="1290 770 32 32" fill="none" stroke="currentColor" stroke-width="1.850" stroke-linecap="butt" stroke-linejoin="miter"><path d="M1296.900 781.08 H1313.600 M1309.400 776.58 L1314 781.08 L1309.400 785.58"/><path d="M1314.900 791.29 H1298.100 M1301.850 786.69 L1297.300 791.29 L1301.850 795.89"/></svg>
<svg class="ic" style="left:1924px;top:770px;color:#8e8c93" width="32" height="32" viewBox="1924 770 32 32" fill="none" stroke="currentColor" stroke-width="1.750" stroke-linecap="round" stroke-linejoin="round"><path d="M1936.200 777.00 H1943"/><path d="M1929.800 780.02 H1949.400"/><path d="M1932.450 780.46 L1933.150 791.86 a3.100 3.100 0 0 0 3.100 3.100 h6.700 a3.100 3.100 0 0 0 3.100-3.100 L1946.750 780.46"/></svg>
<div class="inp" style="left:707px;top:824.4px;width:571.600px"></div>
<div class="inp" style="left:1333px;top:824.4px;width:570.800px"></div>
<span class="t" style="left:728.50px;top:834.32px;font-size:20px;line-height:26px;letter-spacing:0.759px;">30-tablet pack</span>
<span class="t" style="left:1353.80px;top:834.32px;font-size:20px;line-height:26px;letter-spacing:0.599px;">30 tabs</span>
<svg class="ic" style="left:1290px;top:832px;color:#cbbffa" width="32" height="32" viewBox="1290 832 32 32" fill="none" stroke="currentColor" stroke-width="1.850" stroke-linecap="butt" stroke-linejoin="miter"><path d="M1296.900 843.24 H1313.600 M1309.400 838.74 L1314 843.24 L1309.400 847.74"/><path d="M1314.900 853.45 H1298.100 M1301.850 848.85 L1297.300 853.45 L1301.850 858.05"/></svg>
<svg class="ic" style="left:1924px;top:832px;color:#8e8c93" width="32" height="32" viewBox="1924 832 32 32" fill="none" stroke="currentColor" stroke-width="1.750" stroke-linecap="round" stroke-linejoin="round"><path d="M1936.200 839.16 H1943"/><path d="M1929.800 842.18 H1949.400"/><path d="M1932.450 842.62 L1933.150 854.02 a3.100 3.100 0 0 0 3.100 3.100 h6.700 a3.100 3.100 0 0 0 3.100-3.100 L1946.750 842.62"/></svg>
<div class="inp" style="left:707px;top:886.6px;width:571.600px"></div>
<div class="inp" style="left:1333px;top:886.6px;width:570.800px"></div>
<span class="t" style="left:728.50px;top:896.48px;font-size:20px;line-height:26px;letter-spacing:0.467px;">10-tablet pack</span>
<span class="t" style="left:1353.80px;top:896.48px;font-size:20px;line-height:26px;letter-spacing:-0.118px;">10 tabs</span>
<svg class="ic" style="left:1290px;top:894px;color:#cbbffa" width="32" height="32" viewBox="1290 894 32 32" fill="none" stroke="currentColor" stroke-width="1.850" stroke-linecap="butt" stroke-linejoin="miter"><path d="M1296.900 905.40 H1313.600 M1309.400 900.90 L1314 905.40 L1309.400 909.90"/><path d="M1314.900 915.61 H1298.100 M1301.850 911.01 L1297.300 915.61 L1301.850 920.21"/></svg>
<svg class="ic" style="left:1924px;top:894px;color:#8e8c93" width="32" height="32" viewBox="1924 894 32 32" fill="none" stroke="currentColor" stroke-width="1.750" stroke-linecap="round" stroke-linejoin="round"><path d="M1936.200 901.32 H1943"/><path d="M1929.800 904.34 H1949.400"/><path d="M1932.450 904.78 L1933.150 916.18 a3.100 3.100 0 0 0 3.100 3.100 h6.700 a3.100 3.100 0 0 0 3.100-3.100 L1946.750 904.78"/></svg>
<div class="inp" style="left:707px;top:948.7px;width:571.600px"></div>
<div class="inp" style="left:1333px;top:948.7px;width:570.800px"></div>
<span class="t" style="left:727.50px;top:958.64px;font-size:20px;line-height:26px;letter-spacing:0.836px;">60-tablet pack</span>
<span class="t" style="left:1352.80px;top:958.64px;font-size:20px;line-height:26px;letter-spacing:0.816px;">60 tabs</span>
<svg class="ic" style="left:1290px;top:956px;color:#cbbffa" width="32" height="32" viewBox="1290 956 32 32" fill="none" stroke="currentColor" stroke-width="1.850" stroke-linecap="butt" stroke-linejoin="miter"><path d="M1296.900 967.56 H1313.600 M1309.400 963.06 L1314 967.56 L1309.400 972.06"/><path d="M1314.900 977.77 H1298.100 M1301.850 973.17 L1297.300 977.77 L1301.850 982.37"/></svg>
<svg class="ic" style="left:1924px;top:956px;color:#8e8c93" width="32" height="32" viewBox="1924 956 32 32" fill="none" stroke="currentColor" stroke-width="1.750" stroke-linecap="round" stroke-linejoin="round"><path d="M1936.200 963.48 H1943"/><path d="M1929.800 966.50 H1949.400"/><path d="M1932.450 966.94 L1933.150 978.34 a3.100 3.100 0 0 0 3.100 3.100 h6.700 a3.100 3.100 0 0 0 3.100-3.100 L1946.750 966.94"/></svg>
<div style="left:1386.200px;top:462.700px;width:1.200px;height:23.200px;background:#3b3940"></div>
<div style="left:697px;top:441.800px;width:1314px;height:65.200px;border:4px solid #f60206;border-radius:1px"></div>
<svg class="ic" style="left:712px;top:1022px;color:#8a4dfb" width="24" height="24" viewBox="712 1022 24 24" fill="none" stroke="currentColor" stroke-width="2.1" stroke-linecap="round" stroke-linejoin="round"><path d="M717.800 1033.750 H730.300 M724.080 1027.300 V1039.900"/></svg>
<span class="t med" style="left:741.90px;top:1023.10px;font-size:16.6px;line-height:22px;letter-spacing:0.402px;color:#8a4dfb;">Add</span>
</section>
<div class="sbar" style="left:2036px;top:241.300px;width:6.600px;height:775px"></div>
<div style="left:317px;top:0;width:11px;height:1056px;background:linear-gradient(90deg,rgba(50,50,80,.05),rgba(50,50,80,.025) 50%,rgba(50,50,80,0))"></div>
<div style="left:232px;top:1056px;width:1580px;height:120px;background:#a9707f;box-shadow:0 0 50px rgba(15,15,30,.23)"></div>
</main>
</div>
<div class="abs" style="left:232px;top:1056.600px;width:1580px;height:2px;background:#a9707f"></div>
<div class="abs" id="edge"></div>
<div class="abs" style="left:2044px;top:3.500px;width:4px;height:1.200px;background:#b3b1b8"></div>
</body></html>
